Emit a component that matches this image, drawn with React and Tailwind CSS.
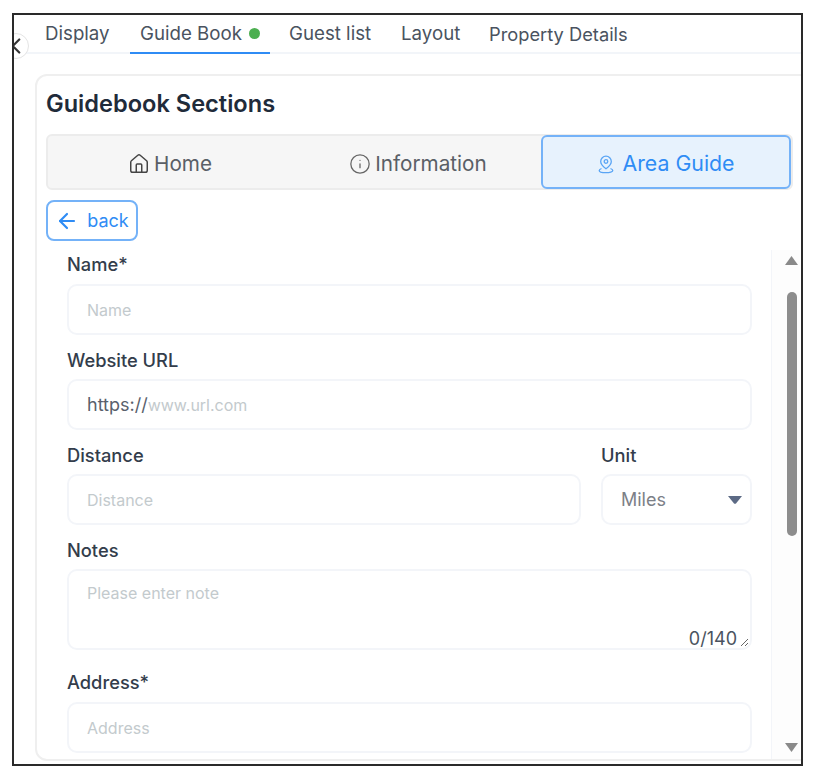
import { ChevronLeft, House, Info, ArrowLeft } from "lucide-react";

const tabs = ["Display", "Guide Book", "Guest list", "Layout", "Property Details"];

const Label = ({ children }) => (
  <div className="h-[20px] text-[18.300px] leading-[20px] font-medium text-[#333d4b]">{children}</div>
);

const Field = ({ placeholder, prefix, className = "" }) => (
  <div className={`h-[51px] rounded-[10px] border-2 border-[#f3f5f9] flex items-center pl-[18px] text-[16px] ${className}`}>
    {prefix && <span className="text-[18px] text-[#59616c]">{prefix}</span>}
    <span className="text-[#c3cacd]">{placeholder}</span>
  </div>
);

const PinIcon = () => (
  <svg width="16" height="19" viewBox="0 0 16 19" fill="none" stroke="#5aa5f5" strokeWidth="1.3">
    <path d="M8 1.2a5.3 5.3 0 0 1 5.3 5.3c0 3-3 5.600-5.300 7.300-2.300-1.700-5.300-4.300-5.300-7.300A5.300 5.300 0 0 1 8 1.200z" />
    <circle cx="8" cy="6.500" r="1.800" />
    <path d="M3.500 13.500c-1.500.6-2.300 1.200-2.300 2 0 1.200 3 2.200 6.800 2.200s6.800-1 6.800-2.200c0-.8-.8-1.400-2.300-2" />
  </svg>
);

export default function App() {
  return (
    <div className="w-[817px] h-[775px] bg-white pt-[13px] pl-[12px] font-['Inter',sans-serif]">
      <div className="relative w-[791px] h-[753px] border-2 border-[#2a2a2a] overflow-hidden bg-white">
        <div className="absolute left-[-11px] top-[18px] w-[26px] h-[26px] rounded-full bg-white border border-[#e4e4e4] flex items-center justify-center">
          <ChevronLeft size={26} strokeWidth={2} className="text-[#333] shrink-0" />
        </div>

        {/* top tabs */}
        <div className="h-[39px] flex items-start border-b-2 border-[#f2f5f9] text-[18.700px] text-[#4a5360]">
          <div className="h-[38px] pl-[31px] w-[116px] leading-[38px]">{tabs[0]}</div>
          <div className="h-[39px] w-[140px] border-b-2 border-[#2f8cf5] pl-[10px] flex items-start">
            <span className="leading-[38px]">{tabs[1]}</span>
            <span className="w-[11px] h-[11px] rounded-full bg-[#4caf50] ml-[7px] mt-[13px]" />
          </div>
          <div className="h-[38px] pl-[19px] w-[131px] leading-[38px]">{tabs[2]}</div>
          <div className="h-[38px] w-[88px] leading-[38px]">{tabs[3]}</div>
          <div className="h-[38px] text-[18.300px] leading-[38px]">{tabs[4]}</div>
        </div>

        {/* card */}
        <div className="ml-[21px] mt-[20px] w-[790px] h-[687px] rounded-[12px] border-2 border-[#efefef] pl-[9px] pt-[13px] overflow-hidden">
          <h2 className="h-[30px] text-[23.600px] leading-[30px] font-semibold text-[#1f2b3a]">Guidebook Sections</h2>

          <div className="mt-[15px] w-[747px] h-[56px] rounded-[6px] border-2 border-[#ececec] bg-[#f6f6f6] flex text-[20.700px] text-[#5a5f66]">
            <div className="w-[247px] flex items-center justify-center gap-[4px] pt-[3px] pr-[3px]">
              <House size={22} strokeWidth={1.6} className="text-[#444]" />
              Home
            </div>
            <div className="w-[246px] flex items-center justify-center gap-[4px] pt-[3px]">
              <Info size={22} strokeWidth={1.4} className="text-[#666]" />
              Information
            </div>
            <div className="w-[250px] rounded-[6px] border-2 border-[#74b2f8] bg-[#e7f2fd] text-[21.300px] text-[#2f8cf5] flex items-center justify-center gap-[8px] my-[-1px] pt-[4px] pl-[1px]">
              <PinIcon />
              Area Guide
            </div>
          </div>

          <div className="mt-[10px] w-[92px] h-[41px] rounded-[8px] border-2 border-[#74b2f8] flex items-center justify-center gap-[8px] text-[18px] text-[#2f8cf5]">
            <ArrowLeft size={24} strokeWidth={2.2} />
            back
          </div>

          <div className="mt-[9px] flex h-[512px]">
            {/* form */}
            <div className="w-[726px] pl-[21px] pr-[19px] pt-[4px] border-r border-[#f3f5f9]">
              <Label>Name*</Label>
              <Field placeholder="Name" className="mt-[10px]" />
              <div className="mt-[15px]"><Label>Website URL</Label></div>
              <Field prefix="https://" placeholder="www.url.com" className="mt-[9px]" />
              <div className="mt-[15px] flex gap-[20px]">
                <div className="w-[514px]">
                  <Label>Distance</Label>
                  <Field placeholder="Distance" className="mt-[9px]" />
                </div>
                <div className="w-[151px]">
                  <Label>Unit</Label>
                  <div className="mt-[9px] h-[51px] rounded-[10px] border-2 border-[#f3f5f9] flex items-center justify-between pl-[18px] pr-[8px] text-[18px] text-[#7c8087]">
                    Miles
                    <svg width="14" height="8" viewBox="0 0 14 8"><path d="M0 0h14L8 7.500Q7 8.200 6 7.500z" fill="#5c6a85" /></svg>
                  </div>
                </div>
              </div>
              <div className="mt-[15px]"><Label>Notes</Label></div>
              <div className="relative mt-[9px] h-[81px] rounded-[10px] border-2 border-[#f3f5f9] pl-[18px] pt-[12px] text-[16px] leading-[20px] text-[#c3cacd]">
                Please enter note
                <span className="absolute right-[13px] bottom-[-3px] text-[18px] leading-[24px] text-[#4a5360]">0/140</span>
                <svg className="absolute right-[1px] bottom-[1px]" width="9" height="9" viewBox="0 0 9 9" stroke="#666" strokeWidth="1">
                  <path d="M1 8 8 1M5 8 8 5" />
                </svg>
              </div>
              <div className="mt-[22px]"><Label>Address*</Label></div>
              <Field placeholder="Address" className="mt-[10px]" />
            </div>

            {/* scrollbar */}
            <div className="w-[28px] bg-[#fdfdfd] flex flex-col items-center pl-[12px] pr-[1px]">
              <svg className="mt-[6px]" width="13" height="9" viewBox="0 0 13 9"><path d="M6.500 0 13 9H0z" fill="#8a8a8a" /></svg>
              <div className="mt-[27px] w-[10px] h-[244px] rounded-[6px] bg-[#8d8d8d]" />
              <svg className="mt-[207px]" width="13" height="9" viewBox="0 0 13 9"><path d="M0 0h13L6.500 9z" fill="#8a8a8a" /></svg>
            </div>
          </div>
        </div>
      </div>
    </div>
  );
}
